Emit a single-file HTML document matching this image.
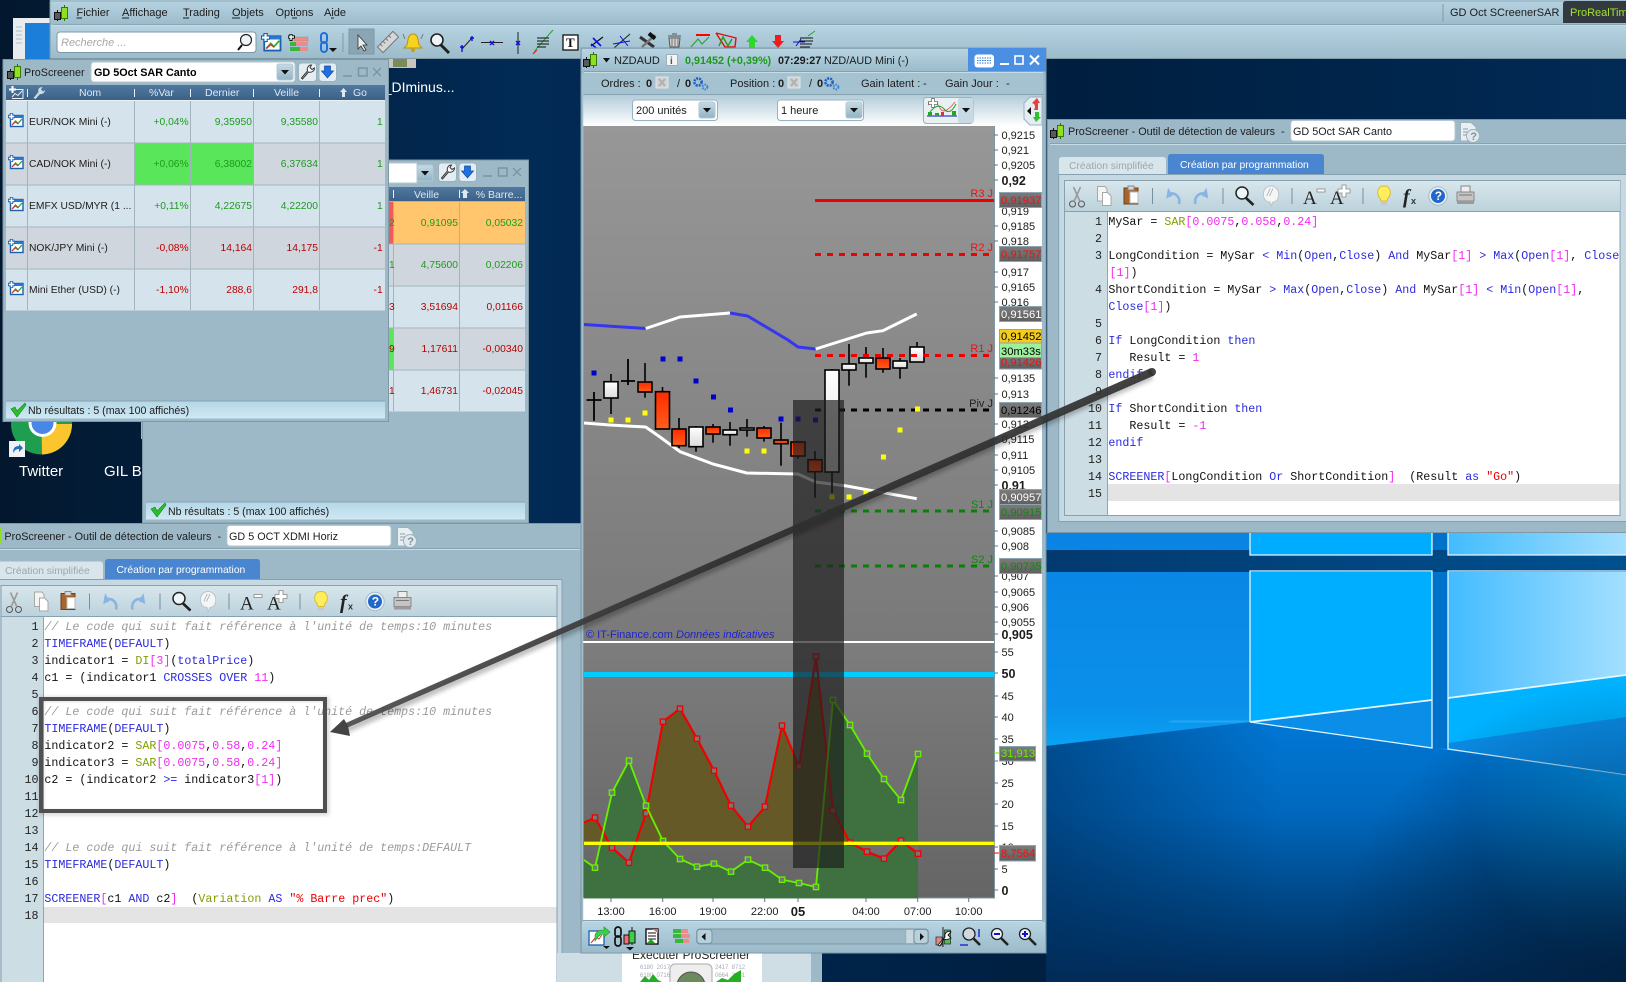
<!DOCTYPE html>
<html><head><meta charset="utf-8"><title>ProRealTime</title>
<style>
html,body{margin:0;padding:0;background:#01234a;overflow:hidden}
svg{display:block}
text{font-family:"Liberation Sans",sans-serif;font-size:11px;fill:#1c1c1c;white-space:pre}
.m text,text.m{font-family:"Liberation Mono",monospace;font-size:11.67px;fill:#111}
.k,.m text.k{fill:#2a2ae0}.g{fill:#7f9f00}.n{fill:#f22cf2}.s{fill:#f00000}.c,.m text.c{fill:#9a9a9a;font-style:italic}
.num text{fill:#222}
.h text{fill:#dde8f0;font-size:10.5px}
.r text{font-size:10.3px}
.r text.up,.up{fill:#1c9c1c}.r text.dn,.dn{fill:#b80000}
.tag{font-size:11.2px}
.b{font-weight:bold}
</style></head><body>
<svg width="1626" height="982" viewBox="0 0 1626 982" xmlns="http://www.w3.org/2000/svg">
<defs>
<linearGradient id="tool" x1="0" y1="0" x2="0" y2="1"><stop offset="0" stop-color="#b6d4e2"/><stop offset="1" stop-color="#9cbbca"/></linearGradient>
<linearGradient id="hdr" x1="0" y1="0" x2="0" y2="1"><stop offset="0" stop-color="#5079a0"/><stop offset="1" stop-color="#3c6188"/></linearGradient>
<linearGradient id="stat" x1="0" y1="0" x2="0" y2="1"><stop offset="0" stop-color="#b4d6e6"/><stop offset="1" stop-color="#cfe8f3"/></linearGradient>
<linearGradient id="cb" x1="0" y1="0" x2="0" y2="1"><stop offset="0" stop-color="#d8e6ec"/><stop offset="1" stop-color="#bcd2dc"/></linearGradient>
<linearGradient id="row3" x1="0" y1="0" x2="0" y2="1"><stop offset="0" stop-color="#b2ccd9"/><stop offset="1" stop-color="#ffffff"/></linearGradient>
<linearGradient id="p1" x1="0" y1="0" x2="0" y2="1"><stop offset="0" stop-color="#979797"/><stop offset="1" stop-color="#797979"/></linearGradient>
<linearGradient id="p2" x1="0" y1="0" x2="0" y2="1"><stop offset="0" stop-color="#7d7d7d"/><stop offset="1" stop-color="#656565"/></linearGradient>
<linearGradient id="tg" x1="0" y1="0" x2="0" y2="1"><stop offset="0" stop-color="#7c7c7c"/><stop offset="1" stop-color="#5f5f5f"/></linearGradient>
<linearGradient id="rc" x1="0" y1="0" x2="0" y2="1"><stop offset="0" stop-color="#ff2a00"/><stop offset="1" stop-color="#ff5f1c"/></linearGradient>
<linearGradient id="wc" x1="0" y1="0" x2="0" y2="1"><stop offset="0" stop-color="#ffffff"/><stop offset="1" stop-color="#dcdcdc"/></linearGradient>
<linearGradient id="btn" x1="0" y1="0" x2="0" y2="1"><stop offset="0" stop-color="#c4dbe6"/><stop offset="1" stop-color="#92b3c3"/></linearGradient>
<linearGradient id="navy" x1="0" y1="0" x2="1" y2="0"><stop offset="0" stop-color="#03182e"/><stop offset=".32" stop-color="#012a55"/><stop offset=".66" stop-color="#001f40"/><stop offset="1" stop-color="#012a55"/></linearGradient>
<linearGradient id="wall1" x1="0" y1="533" x2="0" y2="750" gradientUnits="userSpaceOnUse"><stop offset="0" stop-color="#0a84e4"/><stop offset=".8" stop-color="#0a90ea"/><stop offset="1" stop-color="#0aa4f6"/></linearGradient>
<linearGradient id="wall2" x1="0" y1="720" x2="0" y2="982" gradientUnits="userSpaceOnUse"><stop offset="0" stop-color="#0078d6"/><stop offset=".35" stop-color="#0068be"/><stop offset=".7" stop-color="#004684"/><stop offset="1" stop-color="#012b58"/></linearGradient>
<linearGradient id="wallL" x1="1046" y1="0" x2="1280" y2="0" gradientUnits="userSpaceOnUse"><stop offset="0" stop-color="#012b58" stop-opacity=".55"/><stop offset="1" stop-color="#012b58" stop-opacity="0"/></linearGradient>
<linearGradient id="pr" x1="1448" y1="0" x2="1626" y2="0" gradientUnits="userSpaceOnUse"><stop offset="0" stop-color="#42bcff"/><stop offset="1" stop-color="#a4dfff"/></linearGradient>
<linearGradient id="bar" x1="0" y1="0" x2="1" y2="0"><stop offset="0" stop-color="#023a70"/><stop offset="1" stop-color="#00508f"/></linearGradient>
<linearGradient id="arw" x1="345" y1="726" x2="1152" y2="372" gradientUnits="userSpaceOnUse"><stop offset="0" stop-color="#4c4c4c"/><stop offset=".5" stop-color="#2e2e2e"/><stop offset="1" stop-color="#333"/></linearGradient>
<radialGradient id="corner" cx="1626" cy="982" r="300" gradientUnits="userSpaceOnUse"><stop offset="0" stop-color="#012040" stop-opacity=".95"/><stop offset="1" stop-color="#012040" stop-opacity="0"/></radialGradient>
<radialGradient id="blob" cx="1640" cy="800" r="170" gradientUnits="userSpaceOnUse"><stop offset="0" stop-color="#00a8ff" stop-opacity=".95"/><stop offset="1" stop-color="#00a8ff" stop-opacity="0"/></radialGradient>
<filter id="sh" x="-20%" y="-20%" width="140%" height="140%"><feGaussianBlur stdDeviation="2"/></filter>
<clipPath id="above"><rect x="0" y="0" width="1100" height="610"/></clipPath>
<clipPath id="below"><rect x="0" y="610" width="1100" height="170"/></clipPath>
<clipPath id="w2c"><rect x="388" y="160" width="142" height="365"/></clipPath>
<marker id="mg" markerWidth="24" markerHeight="24" refX="12" refY="12" viewBox="0 0 24 24" markerUnits="userSpaceOnUse"><rect x="4" y="4" width="16" height="16" fill="#777" stroke="#66f000" stroke-width="4"/></marker>
<marker id="mr" markerWidth="24" markerHeight="24" refX="12" refY="12" viewBox="0 0 24 24" markerUnits="userSpaceOnUse"><rect x="4" y="4" width="16" height="16" fill="#777" stroke="#f00000" stroke-width="4"/></marker>

<g id="logo"><path d="M3.5 5V16" stroke="#111"/><rect x=".5" y="7.5" width="6" height="7" fill="#5a5a5a" stroke="#111"/><path d="M10.5 0V16" stroke="#2d6a00"/><rect x="7.5" y="2.5" width="6" height="11" fill="#8fe020" stroke="#3a7a00"/></g>
<g id="mini"><rect x="2.500" y="2.500" width="12.500" height="11" fill="#fff" stroke="#1b5fb0" stroke-width="1.400"/><rect x="2.500" y="2.500" width="12.500" height="2.500" fill="#2a78d0"/><path d="M4 12L7.500 8L10 10.500L14 6" fill="none" stroke="#2aa82a" stroke-width="1.300"/><path d="M4 12L7.500 9L10 11" fill="none" stroke="#e03030"/><path d="M3.500 0V7M0 3.500H7" stroke="#1b5fb0" stroke-width="3.400"/><path d="M3.500 .8V6.200M.8 3.500H6.200" stroke="#fff" stroke-width="1.600"/></g>
<g id="wr"><path d="M-6 6L0 -1C-1 -4 1 -7 4 -7L2.5 -4.5L4.5 -2.5L7 -4C7 -1 4 1 1 0L-5 7Z" fill="#fff" stroke="#333" stroke-width="1"/></g>
<g id="dnb"><path d="M-3 -6H3V-1H6L0 6L-6 -1H-3Z" fill="#1f6fe0" stroke="#0c4cab" stroke-width=".7"/></g>
<g id="docq"><path d="M.5 .5H11L16 5V19H.5Z" fill="#e8f0f4" stroke="#9fb2bc"/><path d="M3 7H8M3 10H8M3 13H8" stroke="#8a9ca6"/><circle cx="13" cy="14" r="6.5" fill="#dfe9ee" stroke="#9fb2bc"/><text x="10.2" y="18" style="font-size:11px;fill:#7f919b;font-weight:bold">?</text></g>
<g id="chk"><path d="M0 6L4 4L6 8L14 0L15 2L6 14Z" fill="#2cbf2c" stroke="#168016" stroke-width=".6"/></g>
<g id="gear"><circle cx="5" cy="5" r="3.6" fill="none" stroke="#1f5fc8" stroke-width="2.6" stroke-dasharray="2 1"/><circle cx="12" cy="10" r="2.4" fill="none" stroke="#3a86d8" stroke-width="2" stroke-dasharray="1.6 1"/></g>
<g id="ord"><rect width="12" height="11" fill="#cfd3d3" stroke="#e6e6e6"/><path d="M3 2L9 9M9 2L3 9" stroke="#b0b0b0" stroke-width="2"/></g>
<g id="ddb"><rect width="16" height="16" rx="2" fill="url(#btn)" stroke="#b4c8d2"/><path d="M4 6H12L8 10.5Z" fill="#111"/></g>

<g id="codebar">
<g stroke="#555" fill="none"><circle cx="9.5" cy="8" r="3"/><circle cx="18.5" cy="8" r="3"/><path d="M11 5.5L17.5 -9M17 5.5L10.5 -9" stroke="#9a9a9a" stroke-width="1.6"/></g>
<path d="M34.5 -9.5H42L44 -7V5H34.5Z" fill="#f4f4f4" stroke="#a7a7a7"/><path d="M39.5 -3.5H44.5L48 0V9.5H39.5Z" fill="#fff" stroke="#a7a7a7"/>
<path d="M61 -8H75V8H61Z" fill="#a8642a" stroke="#6e4018"/><path d="M65 -10H71V-6H65Z" fill="#d8d8d8" stroke="#888"/><path d="M67 -4H75V7H67Z" fill="#fff" stroke="#bbb"/>
<path d="M89.5 -8V8M160 -8V8M229 -8V8M300 -8V8" stroke="#75909f" stroke-width="1"/>
<path d="M116 8C118 1 112 -4 106 -2" fill="none" stroke="#8ab4e4" stroke-width="2.6"/><path d="M104 -8V3L110 -1Z" fill="#8ab4e4" transform="rotate(10 106 -2)"/>
<path d="M132.5 8C130.5 1 136.5 -4 142.5 -2" fill="none" stroke="#8ab4e4" stroke-width="2.6"/><path d="M144.5 -8V3L138.5 -1Z" fill="#8ab4e4" transform="rotate(-10 142 -2)"/>
<circle cx="179" cy="-3" r="6" fill="#eef5f8" stroke="#222" stroke-width="1.5"/><path d="M183 2L190.5 9" stroke="#222" stroke-width="2.6"/>
<path d="M208 -10C218 -10 218 6 210 6L208 10L207 6C198 6 198 -10 208 -10Z" fill="#f4f6f6" stroke="#bcc4c8"/><text x="204" y="0" style="font-size:10px;fill:#9aa;font-style:italic">//</text>
<text x="240" y="8" style="font-family:'Liberation Serif',serif;font-size:19px;fill:#222">A</text><rect x="254" y="-7" width="8" height="3" fill="#fff" stroke="#888" stroke-width=".8"/>
<text x="267" y="8" style="font-family:'Liberation Serif',serif;font-size:19px;fill:#222">A</text><path d="M279 -11H283V-7H287V-3H283V1H279V-3H275V-7H279Z" fill="#fff" stroke="#888" stroke-width=".8"/>
<path d="M321 -10C328 -10 329 -2 325 2L324 5H318L317 2C313 -2 314 -10 321 -10Z" fill="#ffee5c" stroke="#d8bc38"/><rect x="318" y="6" width="6" height="3" fill="#c8c8c8"/>
<text x="340" y="7" style="font-family:'Liberation Serif',serif;font-size:20px;font-style:italic;font-weight:bold;fill:#222">f</text><text x="348" y="8" style="font-size:9px;font-weight:bold;fill:#333">x</text>
<circle cx="375" cy="0" r="9.2" fill="#e7f0f4" stroke="#a9bcc6"/><circle cx="375" cy="0" r="7" fill="#2268cc"/><text x="371.8" y="4.2" style="font-size:12px;font-weight:bold;fill:#fff">?</text>
<path d="M398 -10H407V-4H398Z" fill="#eee" stroke="#888"/><path d="M394 -4H411V5H394Z" fill="#c4c4c4" stroke="#888"/><path d="M394 5H411V8H394Z" fill="#9a9a9a"/><path d="M396 -1H409" stroke="#777"/>
</g>
</defs>

<!-- wallpaper -->
<rect width="1626" height="982" fill="url(#navy)"/>
<rect x="1046" y="533" width="580" height="449" fill="url(#wall2)"/>
<path d="M1046 533H1626V775L1250 722L1046 746Z" fill="url(#wall1)"/>
<path d="M1432 533H1448V749L1432 748Z" fill="#0072cb"/>
<rect x="1046" y="550" width="580" height="22" fill="url(#bar)"/>
<rect x="1250" y="533" width="182" height="22" fill="#00acff"/>
<rect x="1448" y="533" width="178" height="22" fill="url(#pr)"/>
<path d="M1250 572H1432V700L1250 722Z" fill="#00aeff"/>
<path d="M1250 722L1432 700V748Z" fill="#0a8ee8"/>
<path d="M1448 572H1626V675L1448 698Z" fill="url(#pr)"/>
<path d="M1448 698L1626 675V717L1448 743Z" fill="#00b2ff"/>
<path d="M1448 743L1626 717V775L1448 749Z" fill="#0a8ce6"/>
<g fill="none" stroke="#e6f6ff" stroke-width="1.300">
<path d="M1250 533V555H1432V533M1448 533V555H1626"/>
<path d="M1250 722V571H1432V748L1250 722"/>
<path d="M1626 775L1448 749V571H1626"/>
<path d="M1250 722L1432 700M1448 698L1626 675" stroke-width="1.800"/>
</g>
<path d="M1170 722L1250 721" stroke="#7fd8ff" stroke-width="3" opacity=".5" filter="url(#sh)"/>
<path d="M1448 749L1626 775V982H1448Z" fill="url(#blob)"/>
<rect x="1300" y="680" width="326" height="302" fill="url(#corner)"/>
<path d="M1046 746L1250 722L1280 726V982H1046Z" fill="url(#wallL)"/>

<!-- desktop items -->
<rect x="13" y="18" width="37" height="42" fill="#e8ecee"/><rect x="25" y="23" width="26" height="36" fill="#1b7ed8"/><path d="M16 27H22M16 31H22M16 35H22M16 39H22M16 43H22" stroke="#b8bcc0"/>
<circle cx="41.5" cy="424" r="30.5" fill="#1f9e50"/><path d="M41.5 424L72 424A30.5 30.5 0 0 1 42 454.5Z" fill="#fbc52d"/><circle cx="42.5" cy="423" r="14" fill="#fff"/><circle cx="42.5" cy="423" r="11" fill="#4a86e8"/>
<rect x="9" y="441" width="16" height="16" fill="#eef2f5"/><path d="M13 453C13 448 15 446 19 446V444L23 448L19 452V449C16 449 15 450 13 453Z" fill="#2470b8"/>
<text x="19" y="476" style="font-size:15px;fill:#fff">Twitter</text>
<text x="104" y="476" style="font-size:15px;fill:#fff">GIL Bo</text>
<rect x="141" y="421" width="2" height="18" fill="#d8b64a"/>
<text x="383.700" y="92" style="font-size:14px;fill:#fff">_DIminus...</text>
<rect x="388" y="59" width="28" height="9" fill="#c6c6bc"/><rect x="393" y="59" width="14" height="8" fill="#7b8a5a"/>

<!-- main window -->
<rect x="50" y="0" width="1576" height="25" fill="url(#tool)"/>
<rect x="50" y="25" width="1576" height="34" fill="url(#tool)"/>
<path d="M50 1H1626" stroke="#8fa9b7"/><path d="M50 .5V58" stroke="#7e98a6"/>
<path d="M54 24.5H1626" stroke="#89a4b3"/><path d="M54 25.5H1626" stroke="#c6dde8"/>
<path d="M50 58.5H1626" stroke="#7e98a6"/>
<use href="#logo" x="54" y="5"/>
<text x="76.5" y="16">Fichier</text><path d="M76.5 18H82" stroke="#222"/>
<text x="122" y="16">Affichage</text><path d="M122 18H129" stroke="#222"/>
<text x="183" y="16">Trading</text><path d="M183 18H189" stroke="#222"/>
<text x="232" y="16">Objets</text><path d="M232 18H240" stroke="#222"/>
<text x="275.5" y="16">Options</text><path d="M292 18H297" stroke="#222"/>
<text x="324" y="16">Aide</text><path d="M331 18H334" stroke="#222"/>
<path d="M1443 4V22" stroke="#7f9aa8"/><text x="1450" y="16">GD Oct SCreenerSAR</text>
<path d="M1563 23V4Q1563 1 1566 1H1626V23Z" fill="#32393f"/><text x="1570" y="16" style="fill:#a6e22a">ProRealTime</text>
<rect x="57" y="32" width="199" height="20.500" rx="3" fill="#fff" stroke="#7d98a6"/>
<text x="61" y="46" style="font-style:italic;fill:#a8a8a8">Recherche ...</text>
<circle cx="246" cy="40" r="5.500" fill="#eef5f8" stroke="#222" stroke-width="1.200"/><path d="M242 45L238 50" stroke="#111" stroke-width="2"/>
<!-- main toolbar icons -->
<g transform="translate(261,33)"><use href="#mini" transform="scale(1.300)"/></g>
<g transform="translate(288,34)"><rect x="6" y="3" width="14" height="4" fill="#f08a8a" stroke="#888" stroke-width=".4"/><rect x="2" y="8" width="13" height="4" fill="#38b838"/><rect x="8" y="8" width="12" height="4" fill="#f08a8a"/><rect x="2" y="13" width="10" height="4" fill="#38b838"/><rect x="12" y="13" width="8" height="4" fill="#f08a8a"/><path d="M3 0V7M0 3H7" stroke="#111" stroke-width="3.200"/><path d="M3 .8V6M.8 3H6" stroke="#fff" stroke-width="1.400"/></g>
<g transform="translate(318,33)" fill="none" stroke="#1f6fe0" stroke-width="2"><rect x="3" y="0" width="6" height="10" rx="3"/><rect x="3" y="9" width="6" height="10" rx="3"/></g><path d="M329 48H337L333 52Z" fill="#111"/>
<path d="M343 33V52" stroke="#7f9aa8"/>
<rect x="349" y="29" width="25" height="25" fill="#8aa6b5" stroke="#7e98a6"/><path d="M358 35V49L361 46L364 51L366 50L363 45H367Z" fill="#e8eef1" stroke="#333" stroke-width=".8"/>
<g transform="rotate(-45 388 42)"><rect x="377" y="38" width="22" height="8" fill="#d6d6d6" stroke="#777"/><path d="M381 38V41M385 38V41M389 38V41M393 38V41" stroke="#777"/></g>
<path d="M413 34C418 34 418 40 419 45L422 48H404L407 45C408 40 408 34 413 34Z" fill="#f7d21e" stroke="#b89410"/><circle cx="413" cy="50" r="2" fill="#c8a010"/><path d="M403 34L405 39M423 34L421 39" stroke="#777"/>
<circle cx="437" cy="40" r="6" fill="#eef5f8" stroke="#222" stroke-width="1.600"/><path d="M441 45L449 53" stroke="#222" stroke-width="3"/>
<path d="M462 49L472 38" stroke="#222"/><path d="M460 47H464M462 45V52M470 38H474M472 36V41" stroke="#1010e0" stroke-width="1.400"/>
<path d="M481 48.500H503" stroke="#222" transform="translate(0,-6)"/><path d="M490 41L494 45M494 41L490 45" stroke="#1010e0" stroke-width="1.400"/>
<path d="M518 32V54" stroke="#222"/><path d="M516 41L520 45M520 41L516 45" stroke="#1010e0" stroke-width="1.400"/>
<path d="M533 54L537 48L553 30" stroke="#28a028" fill="none"/><path d="M537 38H549M537 41H549M537 44H549M537 47H546" stroke="#111"/><path d="M533 54L537 50" stroke="#e02020"/>
<rect x="563" y="35" width="15" height="15" fill="#fff" stroke="#111" stroke-width="1.300"/><text x="566" y="47" style="font-family:'Liberation Serif',serif;font-size:13px;font-weight:bold;fill:#111">T</text>
<path d="M591 46L603 37" stroke="#111" stroke-width="1.200"/><path d="M593 38L601 46M591 44L599 50" stroke="#0d0de0" stroke-width="1.600"/>
<path d="M614 48L630 34" stroke="#222"/><path d="M620 36L628 46M613 44L630 41" stroke="#0d0de0"/>
<path d="M640 37L654 47" stroke="#333" stroke-width="3"/><path d="M655 35L642 47" stroke="#777" stroke-width="2.500"/><rect x="648" y="34" width="8" height="4" fill="#111" transform="rotate(40 652 36)"/>
<path d="M669 38H680L679 47H670Z" fill="#d0d0d0" stroke="#555"/><path d="M668 36H681M672 34H677" stroke="#555"/><path d="M672 39V47M675 39V47M678 39V47" stroke="#777"/>
<path d="M691 47L698 39L702 44L709 37" fill="none" stroke="#2aa82a" stroke-width="1.200"/><path d="M696 35H710" stroke="#f00" stroke-width="2"/>
<path d="M716 33L736 38L735 47H725L716 33" fill="none" stroke="#e01010" stroke-width="1.400"/><path d="M719 46L723 37L728 46L732 39" fill="none" stroke="#1f9c1f" stroke-width="1.400"/>
<path d="M752 35L758 42H755V48H749V42H746Z" fill="#2cd82c"/>
<path d="M778 48L772 41H775V35H781V41H784Z" fill="#f01c1c"/>
<path d="M796 46L801 39M793 42H805" stroke="#1010c0"/><path d="M800 38H813M800 41H813M800 44H812M800 47H810" stroke="#111"/><path d="M808 36L815 31" stroke="#28a028"/>

<!-- window 2 -->
<rect x="142.500" y="160" width="386" height="363" fill="#9db9c7" stroke="#7e98a6"/>
<rect x="388" y="163" width="29" height="20" fill="#fff" stroke="#b4c8d2"/>
<use href="#ddb" x="417" y="165"/>
<rect x="438.500" y="163" width="18" height="18.500" rx="3" fill="#e4eef2" stroke="#9ab2bf"/><use href="#wr" x="447.500" y="172"/>
<rect x="459" y="163" width="17.500" height="18.500" rx="3" fill="#e4eef2" stroke="#9ab2bf"/><use href="#dnb" x="467.500" y="172"/>
<path d="M483 176H492M498.500 168H507V176H498.500ZM513 168L521 176M521 168L513 176" fill="none" stroke="#7a95a4" stroke-width="1.500"/>
<g clip-path="url(#w2c)">
<rect x="388" y="187" width="137" height="14" fill="url(#hdr)"/>
<g class="h"><text x="414" y="198">Veille</text><text x="475.700" y="198">% Barre...</text></g>
<path d="M393.500 190V198M459.500 190V198" stroke="#e8f0f4"/><path d="M465 189L469 193H467V198H463V193H461Z" fill="#dde8f0"/>
<rect x="388" y="202" width="137" height="42" fill="#ffc66d"/><rect x="388" y="202" width="5" height="42" fill="#f05a5a"/>
<rect x="388" y="244" width="137" height="42" fill="#cfd6dd"/>
<rect x="388" y="286" width="137" height="42" fill="#d5e4ec"/>
<rect x="388" y="328" width="137" height="42" fill="#cfd6dd"/><rect x="388" y="328" width="5" height="42" fill="#5ae65a"/>
<rect x="388" y="370" width="137" height="41.500" fill="#d5e4ec"/>
<path d="M388 244H525M388 286H525M388 328H525M388 370H525" stroke="#a4b4bd"/><path d="M393.500 202V411M459.500 202V411" stroke="#a4b4bd"/>
<g class="r" text-anchor="end">
<text x="458" y="226" class="up">0,91095</text><text x="523" y="226" class="up">0,05032</text>
<text x="458" y="268" class="up">4,75600</text><text x="523" y="268" class="up">0,02206</text>
<text x="458" y="310" class="dn">3,51694</text><text x="523" y="310" class="dn">0,01166</text>
<text x="458" y="352" class="dn">1,17611</text><text x="523" y="352" class="dn">-0,00340</text>
<text x="458" y="394" class="dn">1,46731</text><text x="523" y="394" class="dn">-0,02045</text>
</g>
<text x="389" y="226" class="up" style="font-size:10.3px">2</text><text x="389" y="268" class="up" style="font-size:10.3px">1</text><text x="389" y="310" class="dn" style="font-size:10.3px">3</text><text x="389" y="352" class="dn" style="font-size:10.3px">9</text><text x="389" y="394" class="dn" style="font-size:10.3px">1</text>
</g>
<rect x="146" y="502" width="379" height="17.500" fill="url(#stat)"/><path d="M146 502H525" stroke="#86a1b0"/>
<use href="#chk" x="151" y="503"/><text x="168" y="515" style="font-size:10.6px">Nb résultats : 5 (max 100 affichés)</text>

<!-- window 1 -->
<rect x="3" y="59.500" width="385.500" height="362" fill="#9db9c7" stroke="#7e98a6"/>
<use href="#logo" x="7" y="64"/>
<text x="24" y="76" style="font-size:10.8px">ProScreener</text>
<rect x="91" y="62" width="204" height="20" rx="3" fill="#fff" stroke="#b4c8d2"/>
<text x="94" y="76" class="b" style="fill:#000;font-size:10.8px">GD 5Oct SAR Canto</text>
<use href="#ddb" x="277" y="64"/>
<rect x="298.500" y="63" width="18" height="18.500" rx="3" fill="#e4eef2" stroke="#9ab2bf"/><use href="#wr" x="307.500" y="72"/>
<rect x="319" y="63" width="17.500" height="18.500" rx="3" fill="#e4eef2" stroke="#9ab2bf"/><use href="#dnb" x="327.500" y="72"/>
<path d="M343 76H352M358.500 68H367V76H358.500ZM373 68L381 76M381 68L373 76" fill="none" stroke="#7a95a4" stroke-width="1.500"/>
<rect x="6" y="85" width="379" height="15" fill="url(#hdr)"/><path d="M6 100.500H385" stroke="#e8f0f4"/>
<g transform="translate(9,86)"><path d="M3 3.500H14V12.500H3" fill="none" stroke="#e8f0f4"/><path d="M3 11L6 7.500L9 9.500L13 5" fill="none" stroke="#e8f0f4"/><path d="M3.500 0V7M0 3.500H7" stroke="#fff" stroke-width="2"/></g>
<path d="M27.500 89V97M134.500 89V97M190.500 89V97M253.500 89V97M319.500 89V97" stroke="#e8f0f4"/>
<path d="M33.500 98L38.500 92C37.500 89 39.500 87 42.500 87L41 89.500L43 91.500L45 90C45 92.500 42.500 94.500 40 94L35.500 99Z" fill="#cfdbe4"/>
<g class="h"><text x="79" y="96">Nom</text><text x="149" y="96">%Var</text><text x="205" y="96">Dernier</text><text x="274" y="96">Veille</text><text x="353" y="96">Go</text></g>
<path d="M343.500 88L347 92H345V97H342V92H340Z" fill="#dde8f0"/>
<rect x="6" y="101" width="379" height="42" fill="#d5e4ec"/>
<rect x="6" y="143" width="379" height="42" fill="#cfd6dd"/>
<rect x="6" y="185" width="379" height="42" fill="#d5e4ec"/>
<rect x="6" y="227" width="379" height="42" fill="#cfd6dd"/>
<rect x="6" y="269" width="379" height="41.500" fill="#d5e4ec"/>
<rect x="134.500" y="143" width="119" height="42" fill="#5ae65a"/>
<path d="M6 143H385M6 185H385M6 227H385M6 269H385" stroke="#a4b4bd"/>
<path d="M27.500 101V310M134.500 101V310M190.500 101V310M253.500 101V310M319.500 101V310" stroke="#a4b4bd"/>
<use href="#mini" x="8" y="113"/><use href="#mini" x="8" y="155"/><use href="#mini" x="8" y="197"/><use href="#mini" x="8" y="239"/><use href="#mini" x="8" y="281"/>
<g class="r">
<text x="29" y="125">EUR/NOK Mini (-)</text><text x="29" y="167">CAD/NOK Mini (-)</text><text x="29" y="209">EMFX USD/MYR (1 ...</text><text x="29" y="251">NOK/JPY Mini (-)</text><text x="29" y="293">Mini Ether (USD) (-)</text>
</g>
<g class="r" text-anchor="end">
<text x="188.700" y="125" class="up">+0,04%</text><text x="252" y="125" class="up">9,35950</text><text x="318" y="125" class="up">9,35580</text><text x="382.700" y="125" class="up">1</text>
<text x="188.700" y="167" class="up">+0,06%</text><text x="252" y="167" class="up">6,38002</text><text x="318" y="167" class="up">6,37634</text><text x="382.700" y="167" class="up">1</text>
<text x="188.700" y="209" class="up">+0,11%</text><text x="252" y="209" class="up">4,22675</text><text x="318" y="209" class="up">4,22200</text><text x="382.700" y="209" class="up">1</text>
<text x="188.700" y="251" class="dn">-0,08%</text><text x="252" y="251" class="dn">14,164</text><text x="318" y="251" class="dn">14,175</text><text x="382.700" y="251" class="dn">-1</text>
<text x="188.700" y="293" class="dn">-1,10%</text><text x="252" y="293" class="dn">288,6</text><text x="318" y="293" class="dn">291,8</text><text x="382.700" y="293" class="dn">-1</text>
</g>
<rect x="6" y="401" width="379" height="17.500" fill="url(#stat)"/><path d="M6 401H385" stroke="#86a1b0"/>
<use href="#chk" x="11" y="403"/><text x="28" y="414" style="font-size:10.6px">Nb résultats : 5 (max 100 affichés)</text>

<!-- left code window -->
<rect x="0" y="523" width="582" height="459" fill="#9db9c7"/><path d="M0 523.500H582" stroke="#7e98a6"/>
<path d="M0 548.500H580" stroke="#86a1b0"/><path d="M0 549.500H580" stroke="#c6dde8"/>
<rect x="0" y="528" width="2" height="16" fill="#8fe020"/>
<text x="4.400" y="540" style="font-size:10.8px">ProScreener - Outil de détection de valeurs  -</text>
<rect x="227" y="525.500" width="164" height="20.500" rx="3" fill="#fff" stroke="#b4c8d2"/><text x="229" y="540" style="font-size:10.8px">GD 5 OCT XDMI Horiz</text>
<use href="#docq" x="397" y="527"/>
<path d="M0 561.500H100Q103 561.500 103 564V579H0Z" fill="#d8e5ea"/><text x="5" y="574" style="font-size:10.3px;fill:#9aa8b0">Création simplifiée</text>
<path d="M105 579V562Q105 559 108 559H257Q260 559 260 562V579Z" fill="#4a86d0"/><text x="116.500" y="573" style="font-size:10.3px;fill:#fff">Création par programmation</text>
<rect x="-1" y="579.500" width="563" height="420" fill="#c6d9e2" stroke="#86a1b0"/>
<rect x="1" y="585.500" width="556" height="420" fill="#fff" stroke="#86a1b0"/>
<rect x="1.500" y="586" width="555" height="30" fill="url(#cb)"/><path d="M1 616.500H557" stroke="#86a1b0"/>
<rect x="1.500" y="617" width="42" height="365" fill="#cddde4"/><path d="M43.500 617V982" stroke="#8da6b3"/>
<use href="#codebar" x="0" y="601.500"/>
<rect x="44" y="907" width="512.500" height="16" fill="#e4e4e4"/>
<g class="m num" text-anchor="end">
<text x="38.500" y="630">1</text><text x="38.500" y="647">2</text><text x="38.500" y="664">3</text><text x="38.500" y="681">4</text><text x="38.500" y="698">5</text><text x="38.500" y="715">6</text><text x="38.500" y="732">7</text><text x="38.500" y="749">8</text><text x="38.500" y="766">9</text><text x="38.500" y="783">10</text><text x="38.500" y="800">11</text><text x="38.500" y="817">12</text><text x="38.500" y="834">13</text><text x="38.500" y="851">14</text><text x="38.500" y="868">15</text><text x="38.500" y="885">16</text><text x="38.500" y="902">17</text><text x="38.500" y="919">18</text>
</g>
<g class="m">
<text x="44.400" y="630" class="c">// Le code qui suit fait référence à l'unité de temps:10 minutes</text>
<text x="44.400" y="647"><tspan class="k">TIMEFRAME</tspan>(<tspan class="k">DEFAULT</tspan>)</text>
<text x="44.400" y="664">indicator1 = <tspan class="g">DI</tspan><tspan class="n">[3]</tspan>(<tspan class="k">totalPrice</tspan>)</text>
<text x="44.400" y="681">c1 = (indicator1 <tspan class="k">CROSSES OVER</tspan> <tspan class="n">11</tspan>)</text>
<text x="44.400" y="715" class="c">// Le code qui suit fait référence à l'unité de temps:10 minutes</text>
<text x="44.400" y="732"><tspan class="k">TIMEFRAME</tspan>(<tspan class="k">DEFAULT</tspan>)</text>
<text x="44.400" y="749">indicator2 = <tspan class="g">SAR</tspan><tspan class="n">[0.0075</tspan>,<tspan class="n">0.58</tspan>,<tspan class="n">0.24]</tspan></text>
<text x="44.400" y="766">indicator3 = <tspan class="g">SAR</tspan><tspan class="n">[0.0075</tspan>,<tspan class="n">0.58</tspan>,<tspan class="n">0.24]</tspan></text>
<text x="44.400" y="783">c2 = (indicator2 <tspan class="k">&gt;=</tspan> indicator3<tspan class="n">[1]</tspan>)</text>
<text x="44.400" y="851" class="c">// Le code qui suit fait référence à l'unité de temps:DEFAULT</text>
<text x="44.400" y="868"><tspan class="k">TIMEFRAME</tspan>(<tspan class="k">DEFAULT</tspan>)</text>
<text x="44.400" y="902"><tspan class="k">SCREENER</tspan><tspan class="n">[</tspan>c1 <tspan class="k">AND</tspan> c2<tspan class="n">]</tspan>  (<tspan class="g">Variation</tspan> <tspan class="k">AS</tspan> <tspan class="s">"% Barre prec"</tspan>)</text>
</g>
<!-- card below chart -->
<rect x="557" y="953" width="254" height="29" fill="#cfdde5"/>
<rect x="811" y="925" width="11" height="57" fill="#9db9c7"/>
<rect x="622" y="940" width="140" height="42" fill="#fff"/>
<text x="691" y="959" text-anchor="middle" style="font-size:12px;fill:#222">Exécuter ProScreener</text>
<rect x="670" y="964" width="42" height="24" rx="5" fill="#eee" stroke="#aaa"/><circle cx="691" cy="986" r="14" fill="#6d8a5e" stroke="#555"/>
<g><text x="640" y="969" style="font-size:6px;fill:#aab">6180  2017</text><text x="640" y="977" style="font-size:6px;fill:#aab">6180  0716</text><text x="715" y="969" style="font-size:6px;fill:#aab">2417  8712</text><text x="715" y="977" style="font-size:6px;fill:#aab">0664  2031</text></g>
<path d="M640 982L645 976L649 980L653 974L658 980L662 982ZM716 982L722 978L728 980L734 974L741 970V982Z" fill="#22b022"/>

<!-- right code window -->
<rect x="1047" y="119" width="579" height="414" fill="#9db9c7"/><path d="M1047 119.500H1626M1047 532.500H1626M1047.500 119V533" stroke="#7e98a6"/>
<path d="M1050 143.500H1626" stroke="#86a1b0"/><path d="M1050 144.500H1626" stroke="#c6dde8"/>
<use href="#logo" x="1050" y="123"/>
<text x="1068" y="135" style="font-size:10.8px">ProScreener - Outil de détection de valeurs  -</text>
<rect x="1290.700" y="120.500" width="164.300" height="20.500" rx="3" fill="#fff" stroke="#b4c8d2"/><text x="1293" y="135" style="font-size:10.8px">GD 5Oct SAR Canto</text>
<use href="#docq" x="1460" y="122"/>
<path d="M1059 174V160Q1059 157 1062 157H1163Q1166 157 1166 160V174Z" fill="#d8e5ea"/><text x="1069" y="169" style="font-size:10.3px;fill:#9aa8b0">Création simplifiée</text>
<path d="M1168 174V157Q1168 154 1171 154H1321Q1324 154 1324 157V174Z" fill="#4a86d0"/><text x="1180" y="168" style="font-size:10.3px;fill:#fff">Création par programmation</text>
<rect x="1058.700" y="174.500" width="575" height="347" fill="#c6d9e2" stroke="#86a1b0"/>
<rect x="1064.500" y="180.500" width="555.500" height="335" fill="#fff" stroke="#86a1b0"/>
<rect x="1065" y="181" width="555" height="30" fill="url(#cb)"/><path d="M1064 211.500H1620" stroke="#86a1b0"/>
<rect x="1065" y="212" width="42" height="303" fill="#cddde4"/><path d="M1107.500 212V515" stroke="#8da6b3"/>
<use href="#codebar" x="1063" y="196"/>
<rect x="1108" y="484" width="511.500" height="17" fill="#e4e4e4"/>
<g class="m num" text-anchor="end">
<text x="1102" y="225">1</text><text x="1102" y="242">2</text><text x="1102" y="259">3</text><text x="1102" y="293">4</text><text x="1102" y="327">5</text><text x="1102" y="344">6</text><text x="1102" y="361">7</text><text x="1102" y="378">8</text><text x="1102" y="395">9</text><text x="1102" y="412">10</text><text x="1102" y="429">11</text><text x="1102" y="446">12</text><text x="1102" y="463">13</text><text x="1102" y="480">14</text><text x="1102" y="497">15</text>
</g>
<g class="m">
<text x="1108.400" y="225">MySar = <tspan class="g">SAR</tspan><tspan class="n">[0.0075</tspan>,<tspan class="n">0.058</tspan>,<tspan class="n">0.24]</tspan></text>
<text x="1108.400" y="259">LongCondition = MySar <tspan class="k">&lt;</tspan> <tspan class="k">Min</tspan>(<tspan class="k">Open</tspan>,<tspan class="k">Close</tspan>) <tspan class="k">And</tspan> MySar<tspan class="n">[1]</tspan> <tspan class="k">&gt;</tspan> <tspan class="k">Max</tspan>(<tspan class="k">Open</tspan><tspan class="n">[1]</tspan>, <tspan class="k">Close</tspan></text>
<text x="1109.500" y="276"><tspan class="n">[1]</tspan>)</text>
<text x="1108.400" y="293">ShortCondition = MySar <tspan class="k">&gt;</tspan> <tspan class="k">Max</tspan>(<tspan class="k">Open</tspan>,<tspan class="k">Close</tspan>) <tspan class="k">And</tspan> MySar<tspan class="n">[1]</tspan> <tspan class="k">&lt;</tspan> <tspan class="k">Min</tspan>(<tspan class="k">Open</tspan><tspan class="n">[1]</tspan>,</text>
<text x="1108.400" y="310"><tspan class="k">Close</tspan><tspan class="n">[1]</tspan>)</text>
<text x="1108.400" y="344"><tspan class="k">If</tspan> LongCondition <tspan class="k">then</tspan></text>
<text x="1108.400" y="361">   Result = <tspan class="n">1</tspan></text>
<text x="1108.400" y="378" class="k">endif</text>
<text x="1108.400" y="412"><tspan class="k">If</tspan> ShortCondition <tspan class="k">then</tspan></text>
<text x="1108.400" y="429">   Result = <tspan class="n">-1</tspan></text>
<text x="1108.400" y="446" class="k">endif</text>
<text x="1108.400" y="480"><tspan class="k">SCREENER</tspan><tspan class="n">[</tspan>LongCondition <tspan class="k">Or</tspan> ShortCondition<tspan class="n">]</tspan>  (Result <tspan class="k">as</tspan> <tspan class="s">"Go"</tspan>)</text>
</g>

<!-- chart window -->
<rect x="581" y="48" width="465" height="905" fill="#9db9c7" stroke="#7e98a6"/>
<rect x="582" y="49" width="463" height="23" fill="url(#tool)"/>
<rect x="968" y="48" width="78" height="23.500" fill="#4b8fe2"/>
<rect x="974.500" y="54.500" width="19.500" height="13" rx="3" fill="#fff"/><path d="M977 58H991M977 60.500H991M977 63H991" stroke="#3a7ad0" stroke-dasharray="1.500 1"/>
<path d="M1000 64H1009" stroke="#fff" stroke-width="2"/><rect x="1015" y="56" width="8" height="8" fill="none" stroke="#fff" stroke-width="1.600"/><path d="M1030 55.500L1039 64.500M1039 55.500L1030 64.500" stroke="#fff" stroke-width="2"/>
<path d="M584 71.500H968" stroke="#86a1b0"/><path d="M584 72.500H1043" stroke="#c6dde8"/>
<use href="#logo" x="583" y="52"/><path d="M603 58H610L606.500 62.500Z" fill="#111"/>
<text x="614" y="64">NZDAUD</text>
<rect x="666.500" y="54.500" width="11" height="11" fill="#f4f4f4" stroke="#9db0ba"/><text x="670" y="64" style="font-size:10px;fill:#555;font-weight:bold">i</text>
<text x="685" y="64" class="b" style="fill:#1a9a1a;font-size:10.8px">0,91452 (+0,39%)</text>
<text x="778" y="64" class="b" style="font-size:10.800px">07:29:27</text>
<text x="824" y="64" style="font-size:10.8px">NZD/AUD Mini (-)</text>
<rect x="582" y="73" width="461" height="21" fill="#a4c2d0"/>
<path d="M583 94.500H1043" stroke="#86a1b0"/>
<text x="601" y="87">Ordres :</text><text x="646" y="87" class="b">0</text><use href="#ord" x="656" y="77"/><text x="677" y="87">/</text><text x="685" y="87" class="b">0</text><use href="#gear" x="693" y="77"/>
<text x="730" y="87">Position :</text><text x="778" y="87" class="b">0</text><use href="#ord" x="788" y="77"/><text x="809" y="87">/</text><text x="817" y="87" class="b">0</text><use href="#gear" x="824" y="77"/>
<text x="861" y="87">Gain latent :</text><text x="923" y="87">-</text><text x="945" y="87">Gain Jour :</text><text x="1006" y="87">-</text>
<rect x="583" y="95" width="459" height="31" fill="url(#row3)"/>
<rect x="632.500" y="100" width="85" height="20.500" rx="3" fill="#fff" stroke="#9ab2bf"/><text x="636" y="114">200 unités</text><use href="#ddb" x="699" y="102"/>
<rect x="777.500" y="100" width="86" height="20.500" rx="3" fill="#fff" stroke="#9ab2bf"/><text x="781" y="114">1 heure</text><use href="#ddb" x="846" y="102"/>
<rect x="923.500" y="97.500" width="49.500" height="26" rx="3" fill="#e8f0f4" stroke="#9ab2bf"/><rect x="958" y="98" width="15" height="25" rx="2" fill="#c8dae3"/>
<path d="M927 116V116H957" stroke="#1010c0"/><rect x="928" y="112" width="4" height="4" fill="#22a822"/><rect x="935" y="113" width="4" height="3" fill="#22a822"/><rect x="941" y="112" width="3" height="4" fill="#e03030"/><rect x="952" y="111" width="4" height="5" fill="#22a822"/>
<path d="M928 105Q936 100 940 108T955 102" fill="none" stroke="#e06060"/><path d="M930 112Q938 102 944 109T956 104" fill="none" stroke="#22a822"/><path d="M933 98V108M928 103H938" stroke="#777" stroke-width="3.500"/><path d="M933 99V107M929 103H937" stroke="#fff" stroke-width="2"/>
<path d="M962 108H970L966 112.500Z" fill="#111"/>
<path d="M1042 97H1030L1024 103V119L1030 125H1042Z" fill="#e4eef2" stroke="#9ab2bf"/><path d="M1027 111L1031 107V115Z" fill="#111"/><path d="M1037 98L1040 103H1038V110H1034Q1036 106 1034 104L1032 103Z" fill="#e84040"/><path d="M1036 122L1033 117H1035V112H1039V117H1041Z" fill="#30c030"/>

<!-- price pane -->
<rect x="583" y="126" width="411" height="515" fill="url(#p1)"/>
<rect x="583" y="643" width="411" height="255" fill="url(#p2)"/>
<rect x="583" y="641" width="411" height="2" fill="#fff"/>
<rect x="994" y="126" width="48" height="772" fill="#fff"/>
<rect x="583" y="898" width="459" height="22" fill="#fff"/>
<path d="M994.500 126V898H583" fill="none" stroke="#7f98a6"/>
<path d="M583 920.500H1042" stroke="#8aa3b0"/><path d="M583 921.500H1043" stroke="#c6dde8"/>
<rect x="582" y="922" width="463" height="30.500" fill="url(#tool)"/>
<rect x="1042" y="126" width="3" height="796" fill="#9db9c7"/>
<path d="M583 94V920" stroke="#b0c8d4" opacity=".6"/>
<!-- axis -->
<g stroke="#5d7684"><path d="M994 135H998M994 150H998M994 165H998M994 180H998M994 226H998M994 241H998M994 272H998M994 287H998M994 302H998M994 378H998M994 394H998M994 424H998M994 439H998M994 455H998M994 470H998M994 485H998M994 531H998M994 546H998M994 576H998M994 592H998M994 607H998M994 622H998M994 634H998M994 652H998M994 673H998M994 696H998M994 717H998M994 739H998M994 761H998M994 783H998M994 804H998M994 826H998M994 847H998M994 869H998M994 890H998"/>
<path d="M611 898V902M662.700 898V902M713 898V902M764.700 898V902M798 898V902M866 898V902M917.700 898V902M968.700 898V902"/></g>
<g>
<text x="1001.500" y="139">0,9215</text><text x="1001.500" y="154">0,921</text><text x="1001.500" y="169">0,9205</text><text x="1001.500" y="185" class="b" style="font-size:12.5px">0,92</text>
<text x="1001.500" y="215">0,919</text><text x="1001.500" y="230">0,9185</text><text x="1001.500" y="245">0,918</text><text x="1001.500" y="276">0,917</text><text x="1001.500" y="291">0,9165</text><text x="1001.500" y="306">0,916</text>
<text x="1001.500" y="382">0,9135</text><text x="1001.500" y="398">0,913</text><text x="1001.500" y="428">0,912</text><text x="1001.500" y="443">0,9115</text><text x="1001.500" y="459">0,911</text><text x="1001.500" y="474">0,9105</text><text x="1001.500" y="490" class="b" style="font-size:12.5px">0,91</text>
<text x="1001.500" y="535">0,9085</text><text x="1001.500" y="550">0,908</text><text x="1001.500" y="580">0,907</text><text x="1001.500" y="596">0,9065</text><text x="1001.500" y="611">0,906</text><text x="1001.500" y="626">0,9055</text><text x="1001.500" y="639" class="b" style="font-size:12.5px">0,905</text>
<text x="1001.500" y="656">55</text><text x="1001.500" y="678" class="b" style="font-size:12.5px">50</text><text x="1001.500" y="700">45</text><text x="1001.500" y="721">40</text><text x="1001.500" y="743">35</text><text x="1001.500" y="765">30</text><text x="1001.500" y="787">25</text><text x="1001.500" y="808">20</text><text x="1001.500" y="830">15</text><text x="1001.500" y="851">10</text><text x="1001.500" y="873">5</text><text x="1001.500" y="895" class="b" style="font-size:12.5px">0</text>
</g>
<g text-anchor="middle">
<text x="611" y="915">13:00</text><text x="662.700" y="915">16:00</text><text x="713" y="915">19:00</text><text x="764.700" y="915">22:00</text><text x="798" y="916" class="b" style="font-size:13px">05</text><text x="866" y="915">04:00</text><text x="917.700" y="915">07:00</text><text x="968.700" y="915">10:00</text>
</g>
<!-- levels -->
<path d="M815 200.500H994" stroke="#f00000" stroke-width="3"/>
<g stroke-width="3" stroke-dasharray="6 6" fill="none">
<path d="M815 254.500H994" stroke="#f00000"/><path d="M815 355.500H994" stroke="#f00000"/><path d="M815 410H994" stroke="#000"/><path d="M815 511H994" stroke="#0a800a"/><path d="M815 566H994" stroke="#0a800a"/>
</g>
<g text-anchor="end">
<text x="993" y="197" style="fill:#f01010">R3 J</text><text x="993" y="251" style="fill:#f01010">R2 J</text><text x="993" y="352" style="fill:#f01010">R1 J</text><text x="993" y="407" style="fill:#222">Piv J</text><text x="993" y="508" style="fill:#0a8a0a">S1 J</text><text x="993" y="563" style="fill:#0a8a0a">S2 J</text>
</g>
<!-- MA lines -->
<g fill="none" stroke-width="3" stroke-linejoin="round">
<path d="M584 324.500L645.700 328.500" stroke="#3636f0"/><path d="M645.700 328.500L680 317L730 313" stroke="#fff"/><path d="M730 313L747.700 316L788 340L798 347L815.700 349" stroke="#3636f0"/><path d="M815.700 349L866.700 333L883 330.700L916.700 314" stroke="#fff"/>
<path d="M584 423L610 425L645.700 427L660 437L680 451.700L713 464L746.700 473L798 474L815.700 482L846.700 486L916.700 498.700" stroke="#fff"/>
</g>
<!-- candles -->
<g stroke="#000" stroke-width="1.600">
<path d="M594 392V420.700M586.500 400H601.500" stroke-width="1.800"/>
<path d="M611 374V414"/><rect x="604" y="381.700" width="14" height="16.300" fill="url(#wc)"/>
<path d="M628 359V385M621 381H635" stroke-width="1.800"/>
<path d="M645 363V397.700"/><rect x="638" y="382" width="14" height="10" fill="url(#rc)"/>
<path d="M662.500 387V429"/><rect x="655.500" y="391.700" width="14" height="37.300" fill="url(#rc)"/>
<path d="M679 418V448"/><rect x="672" y="429" width="14" height="16.700" fill="url(#rc)"/>
<path d="M696 426V451.700"/><rect x="689" y="427" width="14" height="19.700" fill="url(#wc)"/>
<path d="M713 424V442.700"/><rect x="706" y="427" width="14" height="7" fill="url(#rc)"/>
<path d="M730 422V445.700"/><rect x="723" y="430" width="14" height="4.700" fill="url(#wc)"/>
<path d="M747 419V436.700"/><rect x="740" y="428" width="14" height="2" fill="url(#wc)"/>
<path d="M764 426V441.700"/><rect x="757" y="428" width="14" height="10" fill="url(#rc)"/>
<path d="M781 422.700V465.700"/><rect x="774" y="440" width="14" height="3.700" fill="url(#rc)"/>
<path d="M798 440.700V458.700"/><rect x="791" y="442" width="14" height="14" fill="url(#rc)"/>
<path d="M815 451V497.700"/><rect x="808" y="459.700" width="14" height="12" fill="url(#rc)"/>
<path d="M832 369V493"/><rect x="825" y="370" width="14" height="102" fill="url(#wc)"/>
<path d="M849 344V385.700"/><rect x="842" y="364" width="14" height="6" fill="url(#wc)"/>
<path d="M866 347V377.700"/><rect x="859" y="358" width="14" height="5" fill="url(#wc)"/>
<path d="M883 348V372.700"/><rect x="876" y="358" width="14" height="11" fill="url(#rc)"/>
<path d="M900 358V378.700"/><rect x="893" y="361" width="14" height="7" fill="url(#wc)"/>
<path d="M917 342V347"/><rect x="910" y="347" width="14" height="15" fill="url(#wc)"/>
</g>
<path d="M815 355.500H994" stroke="#f00000" stroke-width="3" stroke-dasharray="6 6" opacity=".95"/>
<!-- SAR dots -->
<g fill="#0000cc">
<rect x="591.500" y="370.500" width="5" height="5"/><rect x="660.500" y="356.500" width="5" height="5"/><rect x="677.500" y="356.500" width="5" height="5"/><rect x="693.500" y="378.500" width="5" height="5"/><rect x="711" y="394.500" width="5" height="5"/><rect x="728" y="407.500" width="5" height="5"/><rect x="778.500" y="416.500" width="5" height="5"/><rect x="795.500" y="416.500" width="5" height="5"/><rect x="813" y="417.500" width="5" height="5"/>
</g>
<g fill="#ffff00">
<rect x="608.500" y="417.500" width="5" height="5"/><rect x="625.500" y="417.500" width="5" height="5"/><rect x="642.500" y="410.500" width="5" height="5"/><rect x="744.500" y="448.500" width="5" height="5"/><rect x="761.500" y="448.500" width="5" height="5"/><rect x="829.500" y="494.500" width="5" height="5"/><rect x="846.500" y="494.500" width="5" height="5"/><rect x="863.500" y="490.500" width="5" height="5"/><rect x="881" y="454.500" width="5" height="5"/><rect x="897.500" y="427.500" width="5" height="5"/><rect x="915" y="406.500" width="5" height="5"/>
</g>
<text x="586" y="638" style="fill:#2222d0">© IT-Finance.com</text><text x="676" y="638" style="fill:#2222d0;font-style:italic">Données indicatives</text>
<!-- indicator pane -->
<g transform="translate(580,640) scale(.33333)">
<path d="M12 660L45 683L96 458L147 362L198 497L249 603L300 657L351 680L402 671L453 695L504 659L555 683L606 719L657 729L708 741L759 180L810 255L861 341L912 417L963 480L1014 342V775H12Z" fill="#3f703f"/>
<path d="M12 548L45 533L96 623L147 668L198 520L249 245L300 206L351 296L402 392L453 497L504 560L555 500L606 257L657 380L708 50L759 512L810 608L861 635L912 656L963 602L1014 641V610H12Z" fill="#655a27" clip-path="url(#above)"/>
<path d="M12 548L45 533L96 623L147 668L198 520L249 245L300 206L351 296L402 392L453 497L504 560L555 500L606 257L657 380L708 50L759 512L810 608L861 635L912 656L963 602L1014 641V610H12Z" fill="#6f6f6f" clip-path="url(#below)"/>
<rect x="12" y="96" width="1231" height="15" fill="#00ccff"/>
<path d="M12 548L45 533L96 623L147 668L198 520L249 245L300 206L351 296L402 392L453 497L504 560L555 500L606 257L657 380L708 50L759 512L810 608L861 635L912 656L963 602L1014 641" fill="none" stroke="#f00000" stroke-width="6.500" marker-mid="url(#mr)" marker-end="url(#mr)"/>
<path d="M12 660L45 683L96 458L147 362L198 497L249 603L300 657L351 680L402 671L453 695L504 659L555 683L606 719L657 729L708 741L759 180L810 255L861 341L912 417L963 480L1014 342" fill="none" stroke="#66f000" stroke-width="5.500" marker-mid="url(#mg)" marker-end="url(#mg)"/>
<rect x="12" y="605" width="1231" height="10" fill="#ffff00"/>
</g>
<!-- dark overlay -->
<rect x="793" y="400" width="51" height="468" fill="#1e1e1e" opacity=".68"/>
<!-- tags -->
<g stroke="#8ea4b0">
<rect x="999.500" y="192.500" width="42" height="15" fill="url(#tg)"/><rect x="999.500" y="246.500" width="42" height="15" fill="url(#tg)"/><rect x="999.500" y="306.500" width="42" height="15" fill="url(#tg)"/>
<rect x="999.500" y="354" width="42" height="15" fill="url(#tg)"/>
<rect x="999.500" y="329.500" width="42" height="13.500" fill="#f5cc1a"/><rect x="999.500" y="343" width="42" height="14.500" fill="#9ef09e"/>
<rect x="999.500" y="402.500" width="42" height="15" fill="url(#tg)"/><rect x="999.500" y="489.500" width="42" height="15" fill="url(#tg)"/><rect x="999.500" y="504.500" width="42" height="15" fill="url(#tg)"/><rect x="999.500" y="558.500" width="42" height="15" fill="url(#tg)"/>
<rect x="999.500" y="746.500" width="36" height="14.500" fill="url(#tg)"/><rect x="999.500" y="845.500" width="36" height="15.500" fill="url(#tg)"/>
</g>
<g>
<text x="1001" y="204" class="tag" style="fill:#f01010">0,91937</text><text x="1001" y="258" class="tag" style="fill:#f01010">0,91757</text><text x="1001" y="318" class="tag" style="fill:#fff">0,91561</text>
<text x="1001" y="340" class="tag" style="fill:#000">0,91452</text><text x="1001" y="355" class="tag" style="fill:#000">30m33s</text><text x="1001" y="366" class="tag" style="fill:#f01010">0,91426</text>
<text x="1001" y="414" class="tag" style="fill:#000">0,91246</text><text x="1001" y="501" class="tag" style="fill:#fff">0,90957</text><text x="1001" y="516" class="tag" style="fill:#0c8a0c">0,90915</text><text x="1001" y="570" class="tag" style="fill:#0c8a0c">0,90735</text>
<text x="1001" y="757" class="tag" style="fill:#66f000">31,913</text><text x="1001" y="857" class="tag" style="fill:#f01010">8,7564</text>
</g>
<path d="M994 753H999" stroke="#66f000"/><path d="M994 853H999" stroke="#f00"/>
<!-- bottom bar -->
<g transform="translate(589,927)"><rect x="0" y="4" width="15" height="14" fill="#fff" stroke="#1b5fb0" stroke-width="1.300"/><path d="M2 16L7 10L10 12L13 8" fill="none" stroke="#e03030"/><path d="M6 8C8 3 12 3 15 3V0L21 5L15 10V7C12 7 10 8 6 14Z" fill="#3ed04a" stroke="#208a28" stroke-width=".6"/><path d="M14 19H21L17.500 22Z" fill="#111"/></g>
<g transform="translate(614,927)" fill="none" stroke="#111" stroke-width="1.700"><rect x="1" y="0" width="6" height="10" rx="3"/><rect x="1" y="9" width="6" height="10" rx="3"/><path d="M18 0V18" stroke-width="1"/><rect x="15" y="4" width="6" height="12" fill="#3ed04a" stroke="#111" stroke-width="1"/><rect x="12" y="8" width="5" height="9" fill="#f07070" stroke="#111" stroke-width="1" transform="translate(-2,0)"/></g><path d="M626 947H634L630 950.500Z" fill="#111"/>
<rect x="646" y="929" width="12" height="15" fill="#fff" stroke="#111" stroke-width="1.400"/><path d="M648 933H656M648 936H656M648 939H656" stroke="#111"/><path d="M652 929H658V933Z" fill="#f06060"/><path d="M647 943L651 939L655 943Z" fill="#28a028"/>
<g transform="translate(673,929)"><rect x="0" y="0" width="12" height="4" fill="#38b838"/><rect x="8" y="0" width="7" height="4" fill="#f08a8a"/><rect x="0" y="5" width="8" height="4" fill="#38b838"/><rect x="8" y="5" width="9" height="4" fill="#f08a8a"/><rect x="2" y="10" width="8" height="4" fill="#38b838"/><rect x="10" y="10" width="6" height="4" fill="#f08a8a"/></g>
<rect x="696.700" y="929" width="231.600" height="15" rx="3" fill="#9cb8c6" stroke="#7b96a4"/>
<rect x="697" y="929.500" width="15" height="14" rx="3" fill="#b8d0dc" stroke="#7b96a4"/><path d="M701.500 936.700L705.500 933V940.500Z" fill="#111"/>
<rect x="905.700" y="929.500" width="8" height="14" fill="#c8d8e0" stroke="#98aeba"/><rect x="914" y="929.500" width="14" height="14" rx="3" fill="#b8d0dc" stroke="#7b96a4"/><path d="M924 936.700L920 933V940.500Z" fill="#111"/>
<g transform="translate(936,927)"><path d="M7 0V20" stroke="#222"/><rect x="8.500" y="3" width="6" height="14" fill="#50c050" stroke="#222" stroke-width=".7"/><rect x="0" y="10" width="6" height="8" fill="#e08888" stroke="#222" stroke-width=".7"/><path d="M2 18L9 10C8 6 12 3 15 5L12 8L15 11C11 13 9 13 8 12L4 19Z" fill="#fff" stroke="#111" stroke-width=".9"/></g>
<circle cx="969" cy="934" r="6" fill="#cfd8dc" stroke="#222" stroke-width="1.300"/><path d="M973 938L980 945" stroke="#222" stroke-width="2.600"/><path d="M979 929V937M960 945H968" stroke="#1010d8" stroke-width="1.300"/>
<circle cx="997" cy="934" r="5.500" fill="#eef5f8" stroke="#222" stroke-width="1.300"/><path d="M1001 938L1008 945" stroke="#222" stroke-width="2.600"/><path d="M994 934H1000" stroke="#1010d8" stroke-width="2"/>
<circle cx="1025" cy="934" r="5.500" fill="#eef5f8" stroke="#222" stroke-width="1.300"/><path d="M1029 938L1036 945" stroke="#222" stroke-width="2.600"/><path d="M1022 934H1028M1025 931V937" stroke="#1010d8" stroke-width="2"/>

<!-- annotations -->
<path d="M1152 376L345 730" stroke="#000" stroke-width="7" opacity=".25" filter="url(#sh)"/>
<path d="M345.900 728.300L344.100 723.700L1150.400 368.300L1153.600 375.700Z" fill="url(#arw)" opacity=".92"/>
<circle cx="1152" cy="372" r="4" fill="#333" opacity=".92"/>
<path d="M330 732L344 719L348 726L350 736Z" fill="#444"/>
<rect x="41" y="699" width="286" height="114" fill="none" stroke="#000" stroke-width="4" opacity=".18" filter="url(#sh)"/>
<rect x="41" y="699" width="284" height="112" fill="none" stroke="#505050" stroke-width="4"/>
</svg>
</body></html>
